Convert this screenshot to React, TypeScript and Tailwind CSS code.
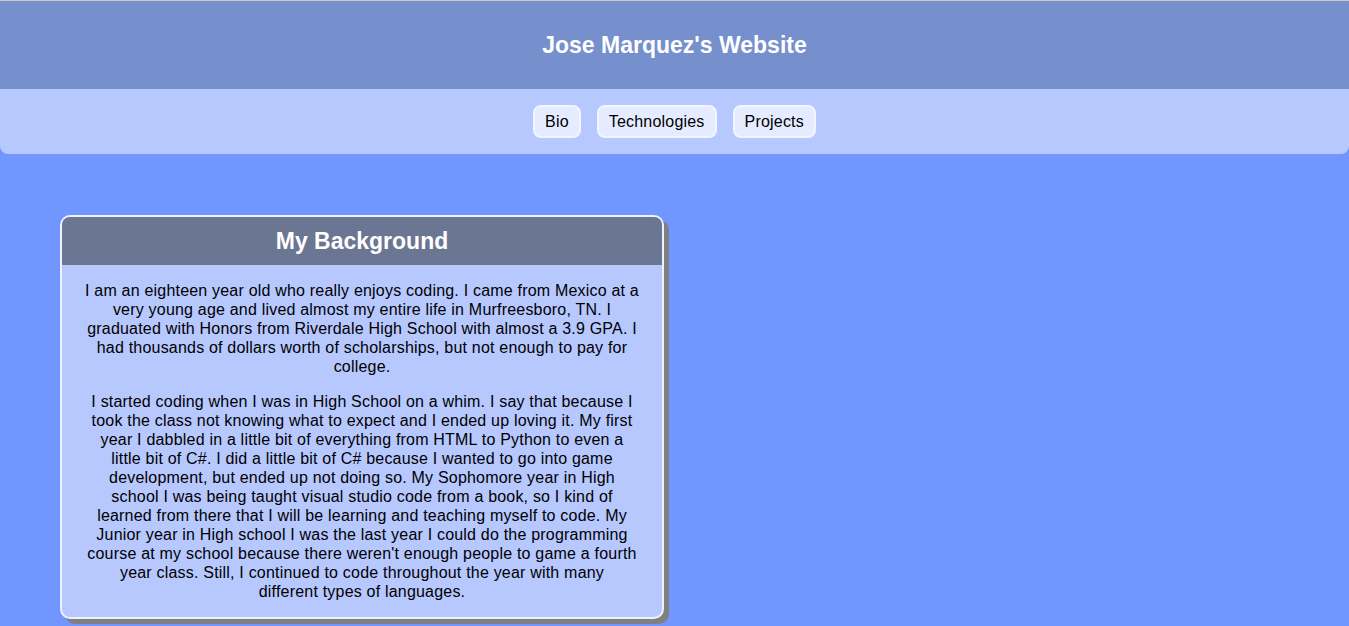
export default function App() {
  const links = ['Bio', 'Technologies', 'Projects']

  return (
    <div className="min-h-screen bg-[#7196ff] font-['Liberation_Sans',Arial,sans-serif] text-black">
      {/* Header */}
      <header className="h-[89px] border-t border-[#c9c9c9] bg-[#768fcd] flex items-center justify-center">
        <h1 className="text-[23px] font-bold text-white">Jose Marquez's Website</h1>
      </header>

      {/* Nav */}
      <nav className="h-[65px] bg-[#b7c8ff] rounded-b-[8px] flex items-center justify-center gap-[16px] tracking-[0.2px]">
        {links.map(l => (
          <button
            key={l}
            className="h-[33px] px-[10px] rounded-[8px] border-2 border-[#f2f5ff] bg-[#e6ecff] text-[16px]"
          >
            {l}
          </button>
        ))}
      </nav>

      {/* Content */}
      <main className="pt-[61px] pl-[60px]">
        <section className="w-[604px] rounded-[10px] border-2 border-[#eef2ff] bg-[#b7c8ff] shadow-[5px_5px_0_#808080] overflow-hidden">
          <div className="h-[48px] bg-[#6b7693] flex items-center justify-center">
            <h2 className="text-[23px] font-bold text-white">My Background</h2>
          </div>
          <div className="px-[22px] text-center text-[16px] leading-[19px] tracking-[0.2px]">
            <p className="my-4">
              I am an eighteen year old who really enjoys coding. I came from Mexico at a very young age and
              lived almost my entire life in Murfreesboro, TN. I graduated with Honors from Riverdale High
              School with almost a 3.9 GPA. I had thousands of dollars worth of scholarships, but not enough
              to pay for college.
            </p>
            <p className="my-4">
              I started coding when I was in High School on a whim. I say that because I took the class not
              knowing what to expect and I ended up loving it. My first year I dabbled in a little bit of
              everything from HTML to Python to even a little bit of C#. I did a little bit of C# because I
              wanted to go into game development, but ended up not doing so. My Sophomore year in High school
              I was being taught visual studio code from a book, so I kind of learned from there that I will
              be learning and teaching myself to code. My Junior year in High school I was the last year I
              could do the programming course at my school because there weren't enough people to game a
              fourth year class. Still, I continued to code throughout the year with many
              <br />
              different types of languages.
            </p>
          </div>
        </section>
      </main>
    </div>
  )
}
